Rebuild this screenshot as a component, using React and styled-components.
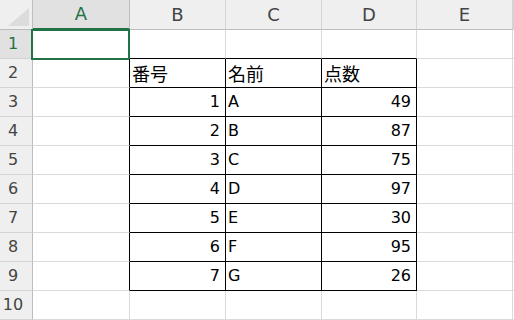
import React from "react"
import styled, { createGlobalStyle } from 'styled-components'

const GlobalStyle = createGlobalStyle`
  html, body {
    margin: 0;
    padding: 0;
    background: #ffffff;
    overflow: hidden;
  }
  body {
    font-family: "DejaVu Sans", "Noto Sans CJK JP", sans-serif;
  }
`

const GRID = '#dadada'
const HEAD_LINE = '#bdbdbd'
const GREEN = '#217346'

const Sheet = styled.div`
  display: grid;
  grid-template-columns: 33px 97px 96px 96px 95px 96px 1px;
  grid-template-rows: 30px repeat(10, 29px);
  width: 514px;
`

const Corner = styled.div`
  background: #efefef;
  border-right: 1px solid ${HEAD_LINE};
  border-bottom: 1px solid ${HEAD_LINE};
  box-sizing: border-box;

  svg {
    display: block;
  }
`

const ColHead = styled.div`
  box-sizing: border-box;
  display: flex;
  align-items: center;
  justify-content: center;
  background: ${p => (p.$active ? '#e1e1e1' : '#efefef')};
  color: ${p => (p.$active ? GREEN : '#444444')};
  border-right: 1px solid ${p => (p.$active ? HEAD_LINE : '#d4d4d4')};
  border-bottom: ${p => (p.$active ? `2px solid ${GREEN}` : `1px solid ${HEAD_LINE}`)};
  font-size: 18px;
  line-height: 20px;
  overflow: hidden;
`

const RowHead = styled.div`
  box-sizing: border-box;
  display: flex;
  align-items: center;
  justify-content: center;
  padding-right: 6px;
  background: ${p => (p.$active ? '#e1e1e1' : '#efefef')};
  color: ${p => (p.$active ? GREEN : '#444444')};
  border-right: 1px solid ${HEAD_LINE};
  border-bottom: 1px solid #d4d4d4;
  font-size: 16px;
  line-height: 20px;
`

const Cell = styled.div`
  box-sizing: border-box;
  position: relative;
  display: flex;
  align-items: center;
  justify-content: ${p => (p.$right ? 'flex-end' : 'flex-start')};
  padding: ${p => (p.$right ? '0 5px 0 0' : '0 0 0 2px')};
  border-right: 1px solid ${p => (p.$rb ? '#000000' : GRID)};
  border-bottom: 1px solid ${p => (p.$bb ? '#000000' : GRID)};
  color: #000000;
  font-size: 16px;
  line-height: 20px;
  white-space: nowrap;
`

const Jp = styled.span`
  font-family: "Noto Sans CJK JP", sans-serif;
  font-size: 18px;
  line-height: 20px;
`

const Selection = styled.div`
  position: absolute;
  left: -2px;
  top: -1px;
  width: 99px;
  height: 31px;
  box-sizing: border-box;
  border: 2px solid ${GREEN};
  pointer-events: none;
`

const columns = ['A', 'B', 'C', 'D', 'E', '']

const rows = [
  ['', '', '', ''],
  ['', { t: '番号', jp: true }, { t: '名前', jp: true }, { t: '点数', jp: true }],
  ['', { t: '1', r: true }, { t: 'A' }, { t: '49', r: true }],
  ['', { t: '2', r: true }, { t: 'B' }, { t: '87', r: true }],
  ['', { t: '3', r: true }, { t: 'C' }, { t: '75', r: true }],
  ['', { t: '4', r: true }, { t: 'D' }, { t: '97', r: true }],
  ['', { t: '5', r: true }, { t: 'E' }, { t: '30', r: true }],
  ['', { t: '6', r: true }, { t: 'F' }, { t: '95', r: true }],
  ['', { t: '7', r: true }, { t: 'G' }, { t: '26', r: true }],
  ['', '', '', ''],
]

// table with thin borders: rows 2-9, columns B-D
const inTable = (r, c) => r >= 1 && r <= 8 && c >= 1 && c <= 3

const App = () => {
  return (
    <>
      <GlobalStyle />
      <Sheet>
        <Corner>
          <svg width="32" height="29" viewBox="0 0 32 29">
            <polygon points="29,8 29,26 8,26" fill="#dcdcdc" />
          </svg>
        </Corner>
        {columns.map((c, i) => (
          <ColHead key={i} $active={i === 0}>{c}</ColHead>
        ))}
        {rows.map((row, r) => (
          <React.Fragment key={r}>
            <RowHead $active={r === 0}>{r + 1}</RowHead>
            {columns.map((_, c) => {
              const v = row[c]
              return (
                <Cell
                  key={c}
                  $right={v && v.r}
                  $rb={inTable(r, c) || inTable(r, c + 1)}
                  $bb={inTable(r, c) || inTable(r + 1, c)}
                >
                  {v && (v.jp ? <Jp>{v.t}</Jp> : v.t)}
                  {r === 0 && c === 0 && <Selection />}
                </Cell>
              )
            })}
          </React.Fragment>
        ))}
      </Sheet>
    </>
  )
}

export default App
